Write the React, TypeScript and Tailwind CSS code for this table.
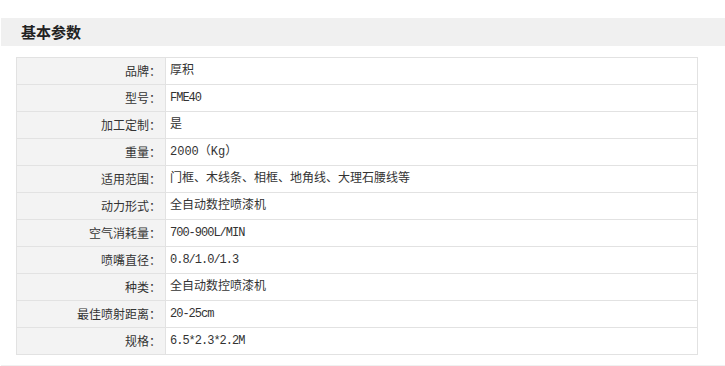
const rows: [string, string][] = [
  ['品牌：', '厚积'],
  ['型号：', 'FME40'],
  ['加工定制：', '是'],
  ['重量：', '2000（Kg）'],
  ['适用范围：', '门框、木线条、相框、地角线、大理石腰线等'],
  ['动力形式：', '全自动数控喷漆机'],
  ['空气消耗量：', '700-900L/MIN'],
  ['喷嘴直径：', '0.8/1.0/1.3'],
  ['种类：', '全自动数控喷漆机'],
  ['最佳喷射距离：', '20-25cm'],
  ['规格：', '6.5*2.3*2.2M'],
]

// plain ascii values get squeezed a bit, like the half-width latin of the original font
const isAscii = (s: string) => /^[\x00-\x7f]+$/.test(s)

export default function App() {
  return (
    <main className="w-[725px] h-[366px] bg-white overflow-hidden text-[#333] font-['Liberation_Mono','Noto_Sans_CJK_SC',monospace]">
      <div className="h-[18px]" />
      <div className="ml-[1px] h-[28px] bg-[#f0f0f0] flex items-center pl-[20px]">
        <h3 className="text-[15px] font-bold text-[#222] font-['Noto_Sans_CJK_SC',sans-serif]">基本参数</h3>
      </div>
      <div className="ml-[16px] mt-[11px] w-[682px] border-t border-l border-[#e2e2e2]">
        {rows.map(([k, v]) => (
          <div key={k} className="flex h-[27px] border-b border-r border-[#e2e2e2] text-[12px]">
            <div className="w-[149px] shrink-0 bg-[#f3f3f3] border-r border-[#e2e2e2] flex items-center justify-end pr-[4px] font-['Noto_Sans_CJK_SC',sans-serif]">
              {k}
            </div>
            <div className={'flex-1 flex items-center pl-[4px] whitespace-nowrap ' + (isAscii(v) ? 'tracking-[-1px]' : '')}>
              {v}
            </div>
          </div>
        ))}
      </div>
      <div className="ml-[1px] mt-[10px] h-[2px] bg-[#f0f0f0]" />
    </main>
  )
}
